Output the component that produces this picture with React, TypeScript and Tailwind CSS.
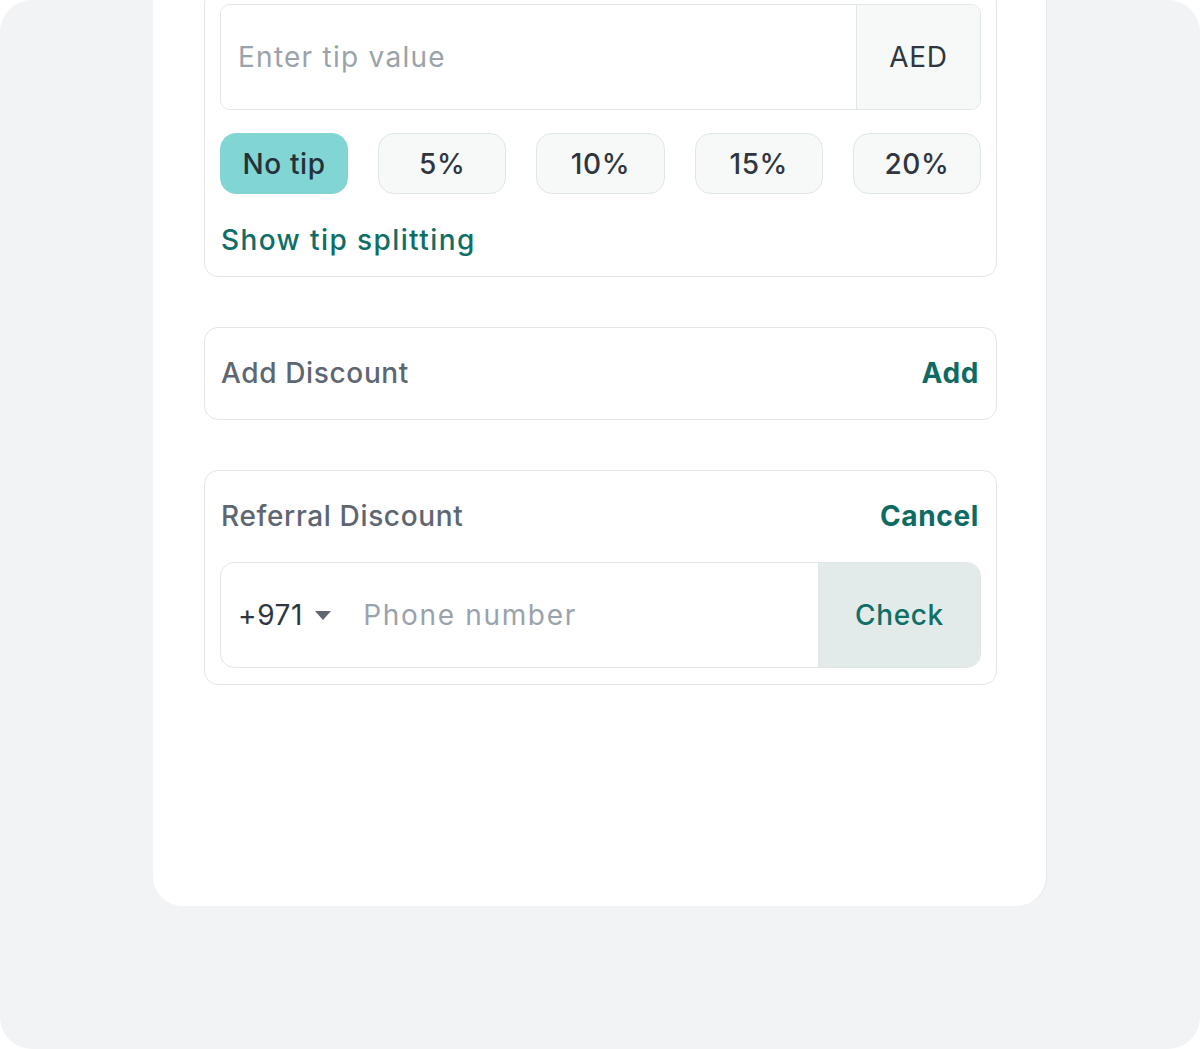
import { useState } from "react";

const tips = ["No tip", "5%", "10%", "15%", "20%"];

export default function App() {
  const [tip, setTip] = useState("No tip");
  const [value, setValue] = useState("");
  const [phone, setPhone] = useState("");

  return (
    <div
      className="h-[1049px] w-[1200px] bg-white"
      style={{ fontFamily: "Inter, 'Noto Sans', sans-serif" }}
    >
      <div className="flex h-full w-full flex-col overflow-hidden rounded-[32px] bg-[#f2f3f5] tracking-[0.04em]">
        {/* scrolled sheet, top cut off */}
        <div className="ml-[153px] mt-[-60px] flex w-[894px] flex-col gap-[50px] rounded-b-[30px] border-r border-[#e3e8e8] bg-white pb-[221px] pl-[51px] pr-[49px] pt-[49px]">
          {/* tip card */}
          <div className="flex flex-col rounded-[14px] border border-[#e0e7e6] px-[15px] pb-[16px] pt-[14px]">
            <div className="flex h-[106px] overflow-hidden rounded-[10px] border border-[#e0e7e6]">
              <input
                value={value}
                onChange={(e) => setValue(e.target.value)}
                placeholder="Enter tip value"
                className="min-w-0 flex-1 bg-white px-[17px] text-[28px] tracking-[0.045em] text-[#2f3640] outline-none placeholder:text-[#9aa3ab]"
              />
              <div className="flex w-[124px] items-center justify-center border-l border-[#e0e7e6] bg-[#f7f9f9] text-[28px] text-[#2f3640]">
                AED
              </div>
            </div>
            <div className="mt-[23px] flex gap-[30px]">
              {tips.map((t) => (
                <button
                  key={t}
                  onClick={() => setTip(t)}
                  className={
                    tip === t
                      ? "h-[61px] flex-1 rounded-[16px] border border-[#81d5d3] bg-[#81d5d3] text-[28px] font-medium text-[#24313a]"
                      : "h-[61px] flex-1 rounded-[16px] border border-[#e0e7e6] bg-[#f7f9f9] text-[28px] font-medium text-[#2f3640]"
                  }
                >
                  {t}
                </button>
              ))}
            </div>
            <button className="mt-[26px] self-start pl-[1px] text-[28px] font-medium leading-[40px] tracking-[0.05em] text-[#0f6e66]">
              Show tip splitting
            </button>
          </div>

          {/* add discount */}
          <div className="flex items-center justify-between rounded-[14px] border border-[#e0e7e6] pb-[26px] pl-[16px] pr-[17px] pt-[25px]">
            <span className="text-[28px] font-medium leading-[40px] text-[#5e6672]">Add Discount</span>
            <button className="text-[28px] font-bold leading-[40px] text-[#0d6b63]">Add</button>
          </div>

          {/* referral */}
          <div className="flex flex-col rounded-[14px] border border-[#e0e7e6] px-[15px] pb-[16px] pt-[25px]">
            <div className="flex items-center justify-between pl-[1px] pr-[2px]">
              <span className="text-[28px] font-medium leading-[40px] text-[#5e6672]">Referral Discount</span>
              <button className="text-[28px] font-bold leading-[40px] text-[#0d6b63]">Cancel</button>
            </div>
            <div className="mt-[26px] flex h-[106px] overflow-hidden rounded-[14px] border border-[#e0e7e6]">
              <div className="flex items-center gap-[12px] pl-[17px] pr-[32px] text-[28px] text-[#2f3640]">
                <span>+971</span>
                <svg width="16" height="9" viewBox="0 0 16 9">
                  <path d="M0 0h16L8 9z" fill="#5f6670" />
                </svg>
              </div>
              <input
                value={phone}
                onChange={(e) => setPhone(e.target.value)}
                placeholder="Phone number"
                className="min-w-0 flex-1 bg-white text-[28px] tracking-[0.06em] text-[#2f3640] outline-none placeholder:text-[#9aa3ab]"
              />
              <button className="w-[162px] border-l border-[#e0e7e6] bg-[#e3ebea] text-[28px] font-medium text-[#0f6e66]">
                Check
              </button>
            </div>
          </div>
        </div>
      </div>
    </div>
  );
}
